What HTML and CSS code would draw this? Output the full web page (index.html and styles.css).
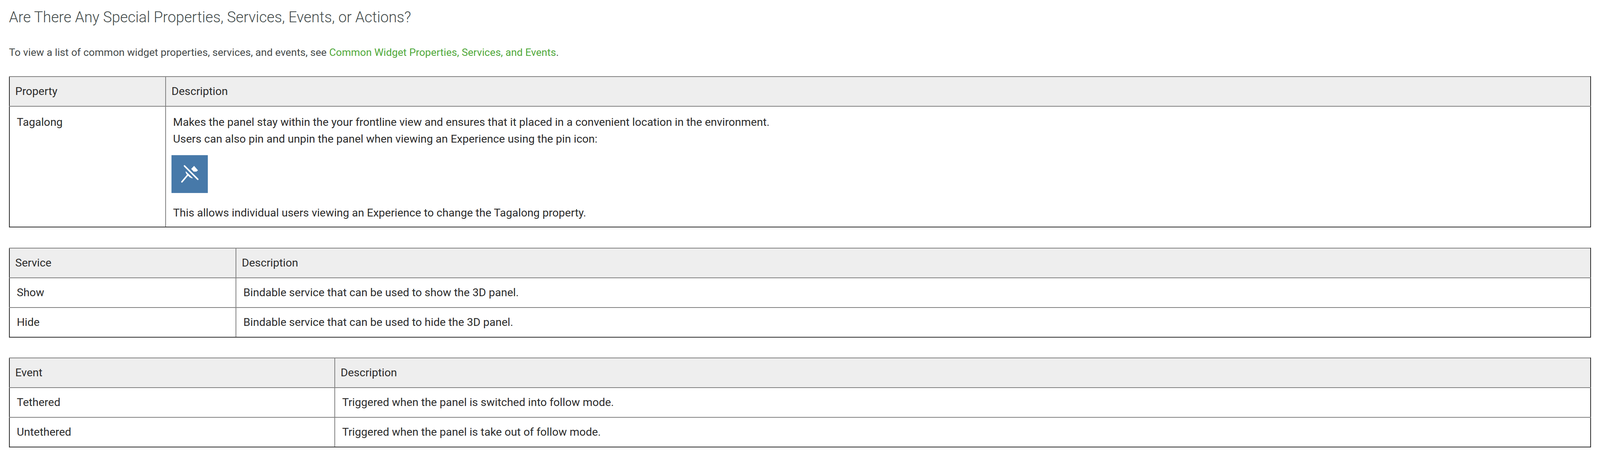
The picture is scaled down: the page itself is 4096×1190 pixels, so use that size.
FILE: index.html
```html
<!DOCTYPE html>
<html lang="en">
<head>
<meta charset="utf-8">
<title>Special Properties</title>
<link rel="stylesheet" href="styles.css">
</head>
<body>
<main class="page">
  <h2 class="title">Are There Any Special Properties, Services, Events, or Actions?</h2>
  <p class="intro">To view a list of common widget properties, services, and events, see <a class="link" href="#">Common Widget Properties, Services, and Events</a>.</p>

  <table class="grid grid-property">
    <thead><tr><th class="first">Property</th><th>Description</th></tr></thead>
    <tbody>
      <tr>
        <td class="first">Tagalong</td>
        <td>
          <p class="line">Makes the panel stay within the your frontline view and ensures that it placed in a convenient location in the environment.</p>
          <p class="line">Users can also pin and unpin the panel when viewing an Experience using the pin icon:</p>
          <div class="pin">
            <svg class="pin-svg" viewBox="0 0 98 102" aria-hidden="true">
              <rect width="98" height="102" fill="#4779a9"/>
              <path d="M35 29 71 65" stroke="#fff" stroke-width="4" stroke-linecap="round" fill="none"/>
              <path d="M53 37 61 29 71.5 41 67 44.5 60 44.5Z" fill="#fff"/>
              <path d="M39 45 56 61.5 50 59 41 50Z" fill="#fff" stroke="#fff" stroke-width="2" stroke-linejoin="round"/>
              <path d="M45 52 28 72" stroke="#fff" stroke-width="4" stroke-linecap="round" fill="none"/>
            </svg>
          </div>
          <p class="line last">This allows individual users viewing an Experience to change the Tagalong property.</p>
        </td>
      </tr>
    </tbody>
  </table>

  <table class="grid grid-service">
    <thead><tr><th class="first">Service</th><th>Description</th></tr></thead>
    <tbody>
      <tr><td class="first">Show</td><td>Bindable service that can be used to show the 3D panel.</td></tr>
      <tr><td class="first">Hide</td><td>Bindable service that can be used to hide the 3D panel.</td></tr>
    </tbody>
  </table>

  <table class="grid grid-event">
    <thead><tr><th class="first">Event</th><th>Description</th></tr></thead>
    <tbody>
      <tr><td class="first">Tethered</td><td>Triggered when the panel is switched into follow mode.</td></tr>
      <tr><td class="first">Untethered</td><td>Triggered when the panel is take out of follow mode.</td></tr>
    </tbody>
  </table>
</main>
</body>
</html>
```
FILE: styles.css
```css
* { box-sizing: border-box; }
html, body { margin: 0; background: #fff; }
body { font-family: Roboto, "Liberation Sans", sans-serif; color: #2b2b2b; }
.page { padding: 14px 23px 0 23px; width: 4096px; }
.title { margin: 0; font-size: 38px; font-weight: 300; line-height: 60px; color: #434b4b; }
.intro { margin: 40px 0 0; font-size: 26.6px; line-height: 40px; color: #454a4a; }
.link { color: #4fa83a; text-decoration: none; }
.grid { width: 4050px; table-layout: fixed; border-collapse: collapse; border: 2px solid #2b2b2b; margin: 0 0 51.5px; font-size: 28.5px; line-height: 40px; }
.intro + .grid { margin-top: 41px; }
.grid th { height: 76px; padding: 0 14px; font-weight: 400; text-align: left; background: #eee; border: 2px solid #808080; }
.grid td { height: 76px; padding: 0 18px; border: 2px solid #808080; vertical-align: middle; }
.grid thead tr { border-top: 2px solid #2b2b2b; }
.grid .first { border-left: 2px solid #2b2b2b; }
.grid th:last-child, .grid td:last-child { border-right: 2px solid #2b2b2b; }
.grid tbody tr:last-child td { border-bottom: 2px solid #2b2b2b; }
.grid-property .first { width: 400px; }
.grid-service .first { width: 580px; }
.grid-event .first { width: 833px; }
.grid-property td { vertical-align: top; padding-top: 20px; padding-bottom: 15px; }
.line { margin: 0 0 3px; }
.pin { margin: 21px 0 31px -4px; line-height: 0; }
.pin-svg { width: 93px; height: 97px; display: block; }
.last { margin: 0; }
```
